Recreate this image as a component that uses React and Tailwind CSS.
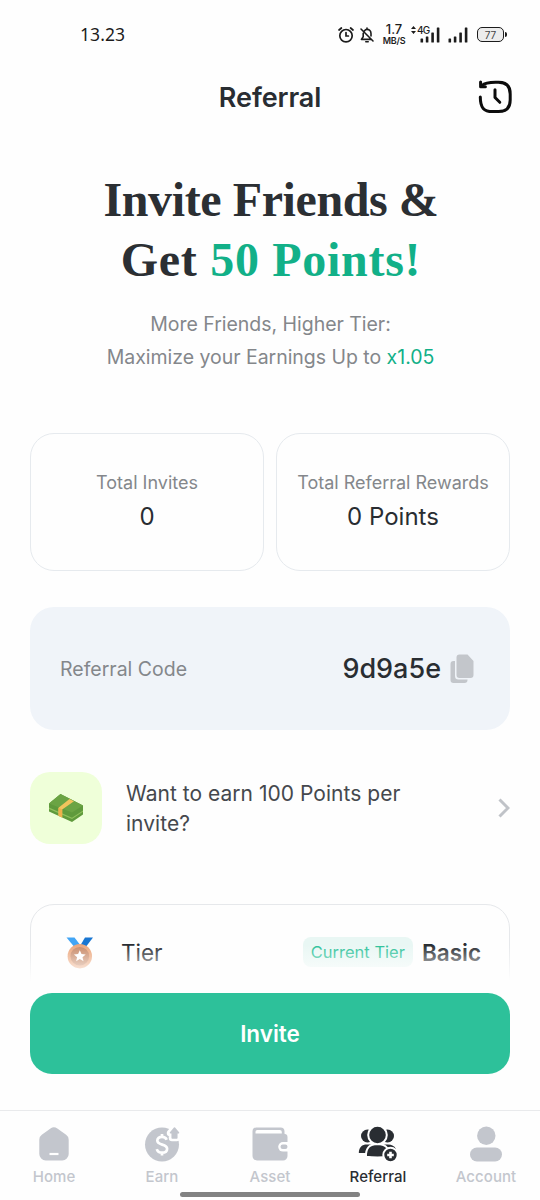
function AlarmIcon() {
  return (
    <svg viewBox="0 0 18 18" fill="none" stroke="#1c1c1c" strokeWidth="1.7" strokeLinecap="round" className="w-[18px] h-[18px]">
      <circle cx="9" cy="9.7" r="6.2" />
      <path d="M9 6.6V10h2.4M2 4l2.4-2M16 4l-2.4-2" />
    </svg>
  );
}

function MutedBellIcon() {
  return (
    <svg viewBox="0 0 16 18" fill="none" stroke="#1c1c1c" strokeWidth="1.6" strokeLinecap="round" strokeLinejoin="round" className="w-4 h-[18px]">
      <path d="M5.2 5.2C6 4 7 3.4 8 3.4c2.4 0 4 1.9 4 4.2V10M4.2 7.2v3.6l-1.8 2.6h9.4M8 2v1.4M6.8 15.8h2.4M2 3l12 12" />
    </svg>
  );
}

function SignalIcon() {
  return (
    <svg viewBox="0 0 20 16" fill="#1c1c1c" className="w-5 h-4">
      <rect x="0.5" y="11.5" width="2.6" height="4" rx="0.6" />
      <rect x="5.8" y="9.5" width="2.6" height="6" rx="0.6" />
      <rect x="11.3" y="5.5" width="2.6" height="10" rx="0.6" />
      <rect x="16.8" y="0.5" width="2.6" height="15" rx="0.6" />
    </svg>
  );
}

function StatusBar() {
  return (
    <div className="flex h-[68px] shrink-0 items-center justify-between pl-20 pr-[33px] pt-px text-[#1c1c1c]">
      <span className="font-['Noto_Sans',sans-serif] text-[17.5px] leading-none tracking-[0.1px]">13.23</span>
      <div className="flex items-center">
        <AlarmIcon />
        <span className="ml-1"><MutedBellIcon /></span>
        <div className="ml-[7px] flex w-6 flex-col items-center font-medium">
          <span className="text-[13px] leading-[10px]">1.7</span>
          <span className="mt-0.5 text-[9px] font-semibold leading-[9px] tracking-[-0.2px]">MB/S</span>
        </div>
        <div className="relative ml-[14px]">
          <SignalIcon />
          <svg viewBox="0 0 5 8" fill="#1c1c1c" className="absolute -left-[9px] -top-px h-2 w-[5px]">
            <path d="M2.5 0L5 3H0zM2.5 8L0 5h5z" />
          </svg>
          <span className="absolute -left-[3px] -top-[2px] text-[10px] font-medium leading-[11px] tracking-[-0.8px]">4G</span>
        </div>
        <span className="ml-2"><SignalIcon /></span>
        <div className="ml-[9px] flex h-[15px] w-[27px] items-center justify-center rounded-[5px] border-[1.5px] border-[#1c1c1c] bg-[#ececec] text-[10px] leading-none text-[#444]">
          77
        </div>
        <span className="ml-px h-[5px] w-[2px] rounded-r-full bg-[#1c1c1c]" />
      </div>
    </div>
  );
}

function HistoryIcon() {
  return (
    <svg viewBox="0 0 36 36" fill="none" stroke="#0c0c0c" strokeWidth="3" strokeLinecap="round" strokeLinejoin="round" className="h-9 w-9">
      <path d="M5 6.5C8 3.6 12 3.2 18.5 3.2h3c8 0 11.7 3.7 11.7 11.7v6c0 8-3.7 11.7-11.700 11.700h-6C7 32.600 3.300 29 3.300 18" />
      <path d="M3.600 3v4.800h4.800M18 10.800v7.700l4.800 4.800" />
    </svg>
  );
}

function CopyIcon() {
  return (
    <svg viewBox="0 0 24 30" fill="#c3c6cb" className="h-[30px] w-6">
      <path d="M9.500 0.500h8L23.500 7v14a3 3 0 01-3 3h-11a3 3 0 01-3-3V3.500a3 3 0 013-3z" />
      <path d="M3.500 7H5v15a3.500 3.500 0 003.500 3.500h9V26a3 3 0 01-3 3h-11a3 3 0 01-3-3V10a3 3 0 013-3z" />
    </svg>
  );
}

function CashIcon() {
  return (
    <svg viewBox="0 0 36 30" className="h-[30px] w-9">
      <path d="M1 10.500L12.500 1 35 12.500v9L24 29 1 18.500z" fill="#5f9a3c" />
      <path d="M1 10.500L12.500 1 35 12.500 24 19.500z" fill="#6ba444" />
      <path d="M1 14.500l23 10.200L35 17.400v1.300l-11 7.400L1 16z" fill="#8fc05c" />
      <path d="M10.500 14.700L21.500 6l4.500 2.200L14.200 16.400v8l-3.700-1.600z" fill="#f2c45d" />
      <path d="M10.500 14.700l3.700 1.700v8l-3.700-1.600z" fill="#eeb04c" />
    </svg>
  );
}

function MedalIcon() {
  return (
    <svg viewBox="0 0 28 32" className="h-8 w-7">
      <path d="M0.500 0.500h8L15 9l-5 3z" fill="#42a5f5" />
      <path d="M19 0.500h8L19 11l-5-2z" fill="#1976d2" />
      <circle cx="13.800" cy="19.200" r="12.200" fill="#eca77d" />
      <circle cx="13.800" cy="19.200" r="9.300" fill="#c88a68" />
      <path d="M13.800 13.200l1.700 3.800 4.200.4-3.200 2.800 1 4.100-3.700-2.200-3.700 2.200 1-4.100-3.200-2.800 4.200-.4z" fill="#fff" />
    </svg>
  );
}

function HomeIcon() {
  return (
    <svg viewBox="0 0 34 34" className="h-[34px] w-[34px]">
      <path d="M13.500 1.400a6 6 0 016.800 0l8.800 6.300a6 6 0 012.600 5V27a6.500 6.500 0 01-6.500 6.500H8.800A6.500 6.500 0 012.300 27V12.700a6 6 0 012.500-5z" fill="#c3c6cd" />
      <path d="M12.500 27h9" stroke="#fff" strokeWidth="2.200" />
    </svg>
  );
}

function EarnIcon() {
  return (
    <svg viewBox="0 0 36 36" fill="none" className="h-9 w-9">
      <circle cx="18" cy="18.500" r="17" fill="#c3c6cd" />
      <path d="M22.700 13.800c-.8-2-2.500-2.900-4.700-2.900-2.800 0-4.700 1.500-4.700 3.700 0 5.300 9.800 2.700 9.800 8.100 0 2.400-2 4-5 4-2.700 0-4.600-1.200-5.300-3.600M18 8v3M18 26.500v3" stroke="#fff" strokeWidth="2.700" />
      <path d="M30.500 2l4.500 5h-2v5h-5V7h-2z" fill="#fff" stroke="#fff" strokeWidth="6.500" strokeLinejoin="round" />
      <path d="M30.500 2l4 4.800h-1.700V12h-4.600V6.800h-1.700z" fill="#c3c6cd" stroke="#c3c6cd" strokeWidth="1.500" strokeLinejoin="round" />
    </svg>
  );
}

function WalletIcon() {
  return (
    <svg viewBox="0 0 36 34" className="h-[34px] w-9">
      <path d="M4.500 0.500h24a4 4 0 014 4v2.300a3.500 3.500 0 013 3.500V29a4.500 4.500 0 01-4.500 4.500H5A4.500 4.500 0 01.500 29V4.500a4 4 0 014-4z" fill="#c3c6cd" />
      <path d="M3.500 4.800a1.800 1.800 0 011.800-1.800h22.500a2 2 0 012 2v1.500H3.500z" fill="#fff" />
      <path d="M36 15h-5a4.800 4.800 0 000 9.600h5z" fill="#fff" />
      <rect x="28.500" y="17.600" width="7" height="4.400" rx="2.200" fill="#c3c6cd" />
    </svg>
  );
}

function ReferralIcon() {
  return (
    <svg viewBox="0 0 40 36" fill="#292d32" className="h-9 w-10">
      <circle cx="9.500" cy="10" r="6.500" />
      <circle cx="29.500" cy="10" r="6.500" />
      <path d="M.8 27c0-6 3.500-8.500 8-8.500h21c4 0 7 1.500 8 4.500l-7 4z" />
      <path d="M8 30.800C7.600 21.500 12 18 19.500 18S31.500 21.500 31 30.800q-11.500 1.500-23 0z" stroke="#fff" strokeWidth="2" />
      <circle cx="19.500" cy="9" r="9.300" stroke="#fff" strokeWidth="2" />
      <circle cx="32.500" cy="29" r="7.200" stroke="#fff" strokeWidth="2" />
      <path d="M32.500 25.700v6.600M29.200 29h6.600" stroke="#fff" strokeWidth="2.600" />
    </svg>
  );
}

function AccountIcon() {
  return (
    <svg viewBox="0 0 34 36" fill="#c3c6cd" className="h-9 w-[34px]">
      <circle cx="17.300" cy="9.700" r="9.200" />
      <rect x="1" y="21.500" width="32" height="14" rx="7" />
    </svg>
  );
}

const STATS = [
  { label: 'Total Invites', value: '0' },
  { label: 'Total Referral Rewards', value: '0 Points' },
];

const TABS = [
  { name: 'Home', Icon: HomeIcon },
  { name: 'Earn', Icon: EarnIcon },
  { name: 'Asset', Icon: WalletIcon },
  { name: 'Referral', Icon: ReferralIcon, active: true },
  { name: 'Account', Icon: AccountIcon },
];

function StatCard({ label, value }) {
  return (
    <div className="flex h-[138px] flex-1 flex-col items-center justify-center rounded-[24px] border-[1.5px] border-[#e6eaee] pb-[3px]">
      <span className="whitespace-nowrap text-[18px] leading-7 text-[#84878b]">{label}</span>
      <span className="mt-1 text-[24px] leading-8 text-[#292d32]">{value}</span>
    </div>
  );
}

function BottomNav() {
  return (
    <nav className="relative grid h-[90px] shrink-0 grid-cols-5 border-t-[1.5px] border-[#e9eaec]">
      {TABS.map(({ name, Icon, active }) => (
        <button key={name} className="flex flex-col items-center pt-[15px]">
          <span className="flex h-9 items-center">
            <Icon />
          </span>
          <span className={`mt-[3px] text-[15px] font-medium leading-6 tracking-[0.05px] ${active ? 'text-[#292d32]' : 'text-[#c3c6cd]'}`}>
            {name}
          </span>
        </button>
      ))}
      {/* System home indicator */}
      <div className="absolute bottom-[3px] left-[180px] h-[5px] w-[180px] rounded-full bg-[#828282]" />
    </nav>
  );
}

export default function App() {
  return (
    <div className="flex h-[1200px] w-[540px] flex-col overflow-hidden bg-[#fefefe] font-['Inter',sans-serif] text-[#292d32]">
      <StatusBar />
      <header className="grid h-[58px] shrink-0 grid-cols-[1fr_auto_1fr] items-center px-[27px]">
        <h1 className="col-start-2 pt-0.5 text-[27px] font-semibold leading-9 tracking-[-0.1px]">Referral</h1>
        <button className="justify-self-end"><HistoryIcon /></button>
      </header>

      <main className="relative flex min-h-0 flex-1 flex-col overflow-hidden px-[30px]">
        <h2 className="mt-[44px] pl-0.5 text-center font-['Liberation_Serif',serif] text-[48px] font-bold leading-[60px] text-[#2b2f33]">
          <span className="block tracking-[-0.4px]">Invite Friends &amp;</span>
          <span className="block tracking-[0.7px]">
            Get <span className="text-[#12b088]">50 Points!</span>
          </span>
        </h2>
        <p className="mt-[18px] pl-px text-center text-[19.5px] leading-[33px] tracking-[-0.03px] text-[#84878b]">
          More Friends, Higher Tier:<br />
          Maximize your Earnings Up to <span className="text-[#12b088]">x1.05</span>
        </p>

        <div className="mt-[59px] flex shrink-0 gap-3">
          {STATS.map(s => <StatCard key={s.label} {...s} />)}
        </div>

        <div className="mt-9 flex h-[123px] shrink-0 items-center justify-between rounded-[24px] bg-[#f0f4f9] pl-[30px] pr-9">
          <span className="pt-0.5 text-[19.5px] text-[#84878b]">Referral Code</span>
          <div className="flex items-center gap-[9px]">
            <span className="pt-0.5 text-[27px] font-medium">9d9a5e</span>
            <CopyIcon />
          </div>
        </div>

        <div className="mt-[42px] flex shrink-0 items-center">
          <div className="flex h-[72px] w-[72px] items-center justify-center rounded-[20px] bg-[#efffd9]">
            <CashIcon />
          </div>
          <p className="ml-6 w-[300px] pt-px text-[21px] leading-[30px] tracking-[0.03px] text-[#45484d]">Want to earn 100 Points per invite?</p>
          <svg viewBox="0 0 12 20" fill="none" stroke="#c0c3c8" strokeWidth="3" className="ml-auto h-5 w-3">
            <path d="M1.500 1.500L10 10l-8.500 8.500" />
          </svg>
        </div>

        <div className="mt-[60px] flex h-[150px] shrink-0 items-start rounded-t-[24px] border-[1.5px] border-[#e6e8eb] pl-[35px] pr-7 pt-8">
          <MedalIcon />
          <span className="ml-[27px] text-[22.5px] leading-8">Tier</span>
          <span className="ml-auto rounded-[8px] bg-[#e9f7f4] px-2 text-[16.5px] leading-[30px] text-[#2cc199]">Current Tier</span>
          <span className="ml-[9px] text-[22.5px] font-semibold leading-8">Basic</span>
        </div>
        {/* Content fades out above the button */}
        <div className="absolute inset-x-0 bottom-0 h-[48px] bg-linear-to-b from-[#fefefe]/0 to-[#fefefe] to-75%" />
      </main>

      <div className="shrink-0 px-[30px] pb-9">
        <button className="h-[81px] w-full rounded-[22px] bg-[#2dc19a] text-[22.5px] font-semibold text-white">Invite</button>
      </div>
      <BottomNav />
    </div>
  );
}
